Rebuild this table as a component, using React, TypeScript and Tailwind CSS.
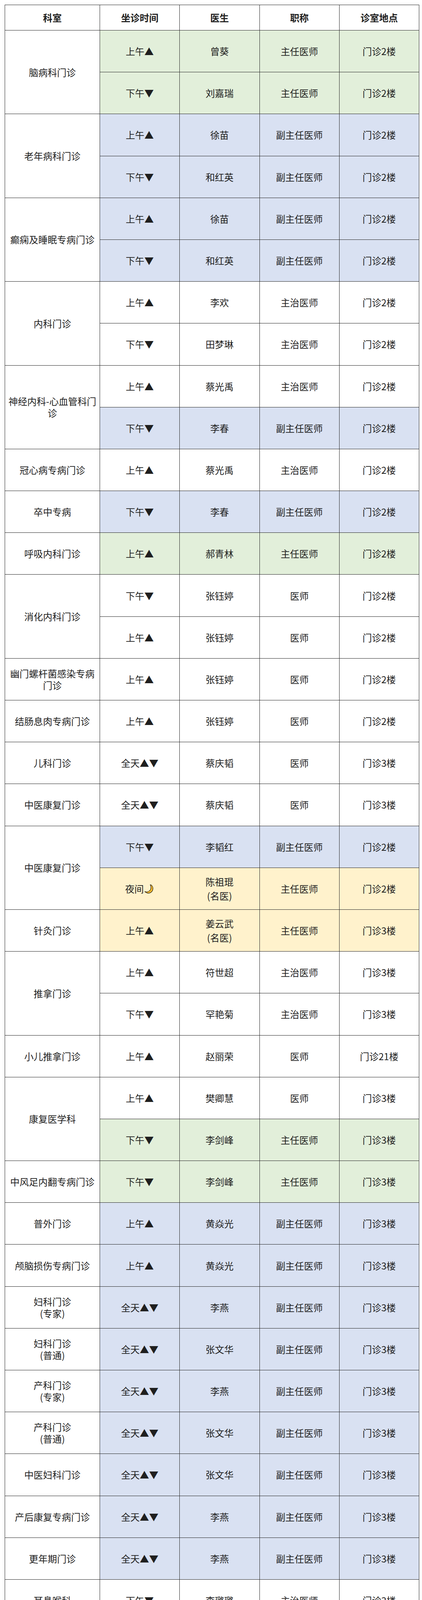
import { Fragment } from "react";

type Shade = "g" | "b" | "y" | "w";

type Slot = {
  time: string;
  doctor: string;
  title: string;
  place: string;
  shade: Shade;
};

type Group = {
  dept: string;
  slots: Slot[];
};

const shadeClass: Record<Shade, string> = {
  g: "bg-[#e2efda]",
  b: "bg-[#d9e1f2]",
  y: "bg-[#fff2cc]",
  w: "bg-white",
};

const am = "上午▲";
const pm = "下午▼";
const allDay = "全天▲▼";

const groups: Group[] = [
  {
    dept: "脑病科门诊",
    slots: [
      { time: am, doctor: "曾葵", title: "主任医师", place: "门诊2楼", shade: "g" },
      { time: pm, doctor: "刘嘉瑞", title: "主任医师", place: "门诊2楼", shade: "g" },
    ],
  },
  {
    dept: "老年病科门诊",
    slots: [
      { time: am, doctor: "徐苗", title: "副主任医师", place: "门诊2楼", shade: "b" },
      { time: pm, doctor: "和红英", title: "副主任医师", place: "门诊2楼", shade: "b" },
    ],
  },
  {
    dept: "癫痫及睡眠专病门诊",
    slots: [
      { time: am, doctor: "徐苗", title: "副主任医师", place: "门诊2楼", shade: "b" },
      { time: pm, doctor: "和红英", title: "副主任医师", place: "门诊2楼", shade: "b" },
    ],
  },
  {
    dept: "内科门诊",
    slots: [
      { time: am, doctor: "李欢", title: "主治医师", place: "门诊2楼", shade: "w" },
      { time: pm, doctor: "田梦琳", title: "主治医师", place: "门诊2楼", shade: "w" },
    ],
  },
  {
    dept: "神经内科-心血管科门诊",
    slots: [
      { time: am, doctor: "蔡光禹", title: "主治医师", place: "门诊2楼", shade: "w" },
      { time: pm, doctor: "李春", title: "副主任医师", place: "门诊2楼", shade: "b" },
    ],
  },
  {
    dept: "冠心病专病门诊",
    slots: [{ time: am, doctor: "蔡光禹", title: "主治医师", place: "门诊2楼", shade: "w" }],
  },
  {
    dept: "卒中专病",
    slots: [{ time: pm, doctor: "李春", title: "副主任医师", place: "门诊2楼", shade: "b" }],
  },
  {
    dept: "呼吸内科门诊",
    slots: [{ time: am, doctor: "郝青林", title: "主任医师", place: "门诊2楼", shade: "g" }],
  },
  {
    dept: "消化内科门诊",
    slots: [
      { time: pm, doctor: "张钰婷", title: "医师", place: "门诊2楼", shade: "w" },
      { time: am, doctor: "张钰婷", title: "医师", place: "门诊2楼", shade: "w" },
    ],
  },
  {
    dept: "幽门螺杆菌感染专病门诊",
    slots: [{ time: am, doctor: "张钰婷", title: "医师", place: "门诊2楼", shade: "w" }],
  },
  {
    dept: "结肠息肉专病门诊",
    slots: [{ time: am, doctor: "张钰婷", title: "医师", place: "门诊2楼", shade: "w" }],
  },
  {
    dept: "儿科门诊",
    slots: [{ time: allDay, doctor: "蔡庆韬", title: "医师", place: "门诊3楼", shade: "w" }],
  },
  {
    dept: "中医康复门诊",
    slots: [{ time: allDay, doctor: "蔡庆韬", title: "医师", place: "门诊3楼", shade: "w" }],
  },
  {
    dept: "中医康复门诊",
    slots: [
      { time: pm, doctor: "李韬红", title: "副主任医师", place: "门诊2楼", shade: "b" },
      { time: "夜间", doctor: "陈祖琨\n(名医)", title: "主任医师", place: "门诊2楼", shade: "y" },
    ],
  },
  {
    dept: "针灸门诊",
    slots: [{ time: am, doctor: "姜云武\n(名医)", title: "主任医师", place: "门诊3楼", shade: "y" }],
  },
  {
    dept: "推拿门诊",
    slots: [
      { time: am, doctor: "符世超", title: "主治医师", place: "门诊3楼", shade: "w" },
      { time: pm, doctor: "罕艳菊", title: "主治医师", place: "门诊3楼", shade: "w" },
    ],
  },
  {
    dept: "小儿推拿门诊",
    slots: [{ time: am, doctor: "赵丽荣", title: "医师", place: "门诊21楼", shade: "w" }],
  },
  {
    dept: "康复医学科",
    slots: [
      { time: am, doctor: "樊卿慧", title: "医师", place: "门诊3楼", shade: "w" },
      { time: pm, doctor: "李剑峰", title: "主任医师", place: "门诊3楼", shade: "g" },
    ],
  },
  {
    dept: "中风足内翻专病门诊",
    slots: [{ time: pm, doctor: "李剑峰", title: "主任医师", place: "门诊3楼", shade: "g" }],
  },
  {
    dept: "普外门诊",
    slots: [{ time: am, doctor: "黄焱光", title: "副主任医师", place: "门诊3楼", shade: "b" }],
  },
  {
    dept: "颅脑损伤专病门诊",
    slots: [{ time: am, doctor: "黄焱光", title: "副主任医师", place: "门诊3楼", shade: "b" }],
  },
  {
    dept: "妇科门诊\n(专家)",
    slots: [{ time: allDay, doctor: "李燕", title: "副主任医师", place: "门诊3楼", shade: "b" }],
  },
  {
    dept: "妇科门诊\n(普通)",
    slots: [{ time: allDay, doctor: "张文华", title: "副主任医师", place: "门诊3楼", shade: "b" }],
  },
  {
    dept: "产科门诊\n(专家)",
    slots: [{ time: allDay, doctor: "李燕", title: "副主任医师", place: "门诊3楼", shade: "b" }],
  },
  {
    dept: "产科门诊\n(普通)",
    slots: [{ time: allDay, doctor: "张文华", title: "副主任医师", place: "门诊3楼", shade: "b" }],
  },
  {
    dept: "中医妇科门诊",
    slots: [{ time: allDay, doctor: "张文华", title: "副主任医师", place: "门诊3楼", shade: "b" }],
  },
  {
    dept: "产后康复专病门诊",
    slots: [{ time: allDay, doctor: "李燕", title: "副主任医师", place: "门诊3楼", shade: "b" }],
  },
  {
    dept: "更年期门诊",
    slots: [{ time: allDay, doctor: "李燕", title: "副主任医师", place: "门诊3楼", shade: "b" }],
  },
  {
    dept: "耳鼻喉科",
    slots: [{ time: pm, doctor: "李璐璐", title: "主治医师", place: "门诊3楼", shade: "w" }],
  },
  {
    dept: "眼科",
    slots: [{ time: pm, doctor: "杨静辉", title: "医师", place: "门诊3楼", shade: "w" }],
  },
  {
    dept: "皮肤科",
    slots: [
      { time: "下午▼夜间", doctor: "杨榆婷", title: "主治医师", place: "门诊3楼", shade: "w" },
      { time: allDay, doctor: "凡福青", title: "医师", place: "门诊3楼", shade: "w" },
    ],
  },
  {
    dept: "口腔科门诊",
    slots: [
      { time: allDay, doctor: "浦丽仁", title: "主治医师", place: "门诊4楼", shade: "w" },
      { time: am, doctor: "魏欣", title: "医师", place: "门诊4楼", shade: "w" },
    ],
  },
  {
    dept: "骨伤科·疼痛科",
    slots: [
      { time: am, doctor: "刘进绕", title: "副主任医师", place: "门诊3楼", shade: "b" },
      { time: pm, doctor: "白捷", title: "副主任医师", place: "门诊3楼", shade: "b" },
    ],
  },
  {
    dept: "骨质疏松专病门诊",
    slots: [{ time: am, doctor: "刘进绕", title: "副主任医师", place: "门诊3楼", shade: "b" }],
  },
  {
    dept: "治未病中医科门诊",
    slots: [{ time: pm, doctor: "张妙兴", title: "副主任医师", place: "门诊2楼", shade: "b" }],
  },
  {
    dept: "体重管理门诊",
    slots: [{ time: pm, doctor: "张妙兴", title: "副主任医师", place: "门诊2楼", shade: "b" }],
  },
  {
    dept: "药物咨询门诊",
    slots: [{ time: pm, doctor: "毛志军", title: "副主任药师", place: "门诊2楼", shade: "b" }],
  },
];

const headers = ["科室", "坐诊时间", "医生", "职称", "诊室地点"];

const cellBase =
  "flex items-center justify-center border-r border-b border-[#262626] text-center";

function Moon() {
  return (
    <svg
      aria-hidden
      className="ml-[1px] inline-block h-[26px] w-[26px] align-[-4px]"
      viewBox="0 0 26 26"
    >
      <path
        d="M17.5 2.2c3.6 2.6 5.6 7.2 4.6 11.9-1.3 6.4-7.6 10.4-13.9 9.2-2.7-.5-5-1.9-6.6-3.9 1.2.6 2.6.9 4.1 1 6.1.3 11.3-4.4 11.7-10.6.2-2.8-.6-5.5-2-7.6h2.1z"
        fill="#ffc12e"
        stroke="#2d2416"
        strokeWidth="1.4"
        strokeLinejoin="round"
      />
      <circle cx="16.5" cy="15.5" r="1.1" fill="#e0a020" />
      <circle cx="12" cy="19" r="0.9" fill="#e0a020" />
      <circle cx="19.3" cy="10.5" r="0.8" fill="#e0a020" />
    </svg>
  );
}

function TimeLabel({ time }: { time: string }) {
  const hasMoon = time.endsWith("夜间");
  return (
    <span className="whitespace-nowrap">
      {time}
      {hasMoon ? <Moon /> : null}
    </span>
  );
}

function MultiLine({ text }: { text: string }) {
  const lines = text.split("\n");
  return (
    <span>
      {lines.map((line, i) => (
        <Fragment key={i}>
          {i > 0 ? <br /> : null}
          {line}
        </Fragment>
      ))}
    </span>
  );
}

export default function App() {
  return (
    <div
      className="bg-white pb-3 pl-3 pt-3 text-[24px] text-[#1f1f1f]"
      style={{ fontFamily: '"Noto Sans CJK SC", "Noto Sans", sans-serif' }}
    >
      <div className="grid w-[1061px] grid-cols-[243px_repeat(4,204.25px)] grid-rows-[65px_repeat(49,107.2px)] border-l border-t border-[#262626]">
        {headers.map((h) => (
          <div className={`${cellBase} bg-white font-bold`} key={h}>
            {h}
          </div>
        ))}

        {groups.map((group, gi) => (
          <Fragment key={gi}>
            {group.slots.map((slot, si) => (
              <Fragment key={si}>
                {si === 0 ? (
                  <div
                    className={`${cellBase} bg-white px-1 leading-[30px] ${
                      group.slots.length === 2 ? "row-span-2" : ""
                    }`}
                  >
                    <MultiLine text={group.dept} />
                  </div>
                ) : null}
                <div className={`${cellBase} ${shadeClass[slot.shade]}`}>
                  <TimeLabel time={slot.time} />
                </div>
                <div className={`${cellBase} leading-[36px] ${shadeClass[slot.shade]}`}>
                  <MultiLine text={slot.doctor} />
                </div>
                <div className={`${cellBase} ${shadeClass[slot.shade]}`}>
                  {slot.title}
                </div>
                <div className={`${cellBase} ${shadeClass[slot.shade]}`}>
                  {slot.place}
                </div>
              </Fragment>
            ))}
          </Fragment>
        ))}
      </div>
    </div>
  );
}
